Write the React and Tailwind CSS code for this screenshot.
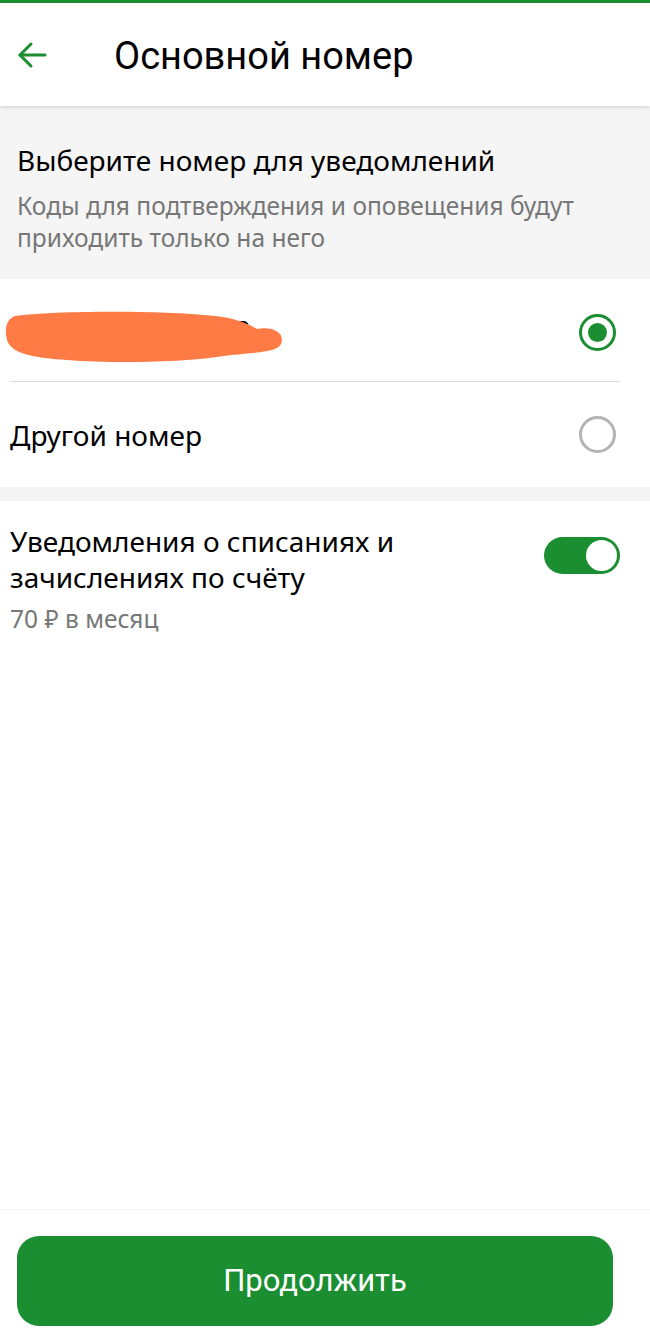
import React from "react";

export default function App() {
  const body = { fontFamily: '"Noto Sans", "Open Sans", sans-serif' };
  return (
    <div className="flex h-[1328px] w-[650px] flex-col bg-white text-black" style={body}>
      <div className="h-[3px] bg-[#1a8e30]" />
      <header className="relative z-10 flex h-[103px] items-center bg-white shadow-[0_2px_4px_rgba(0,0,0,0.12)]">
        <div className="flex w-[114px] items-center pl-[16px]">
          <svg width="32" height="32" viewBox="0 0 32 32" fill="none" stroke="#1a8e30" strokeWidth="3" strokeLinecap="round" strokeLinejoin="round">
            <path d="M29 16H4" />
            <path d="M15 5L4 16l11 11" />
          </svg>
        </div>
        <h1 className="pt-[3px] text-[38px] leading-none text-black" style={{ fontFamily: 'Roboto, "Noto Sans", sans-serif' }}>
          Основной номер
        </h1>
      </header>

      <section className="h-[173px] bg-[#f5f5f5] px-[17px] pt-[36px]">
        <h2 className="text-[28px] leading-[36px] text-black">Выберите номер для уведомлений</h2>
        <p className="mt-[12px] text-[24.5px] leading-[32px] text-[#777]">
          Коды для подтверждения и оповещения будут приходить только на него
        </p>
      </section>

      <div className="pl-[10px] pr-[30px]">
        <div className="relative flex h-[103px] items-center justify-between border-b border-[#dcdcdc] pt-[4px]">
          <span className="pb-[14px] pl-[212px] text-[28px] text-black">та</span>
          <svg className="absolute left-[-5px] top-[31px]" width="280" height="56" viewBox="0 0 280 56">
            <path
              d="M10 6 C50 1 150 0 210 6 C228 8 240 12 252 19 C270 16 280 24 276 34 C272 42 256 42 226 45 C186 52 116 54 62 50 C30 48 6 44 2 30 C-1 18 2 9 10 6 Z"
              fill="#fe7b45"
            />
          </svg>
          <div className="mr-[4px] flex h-[37px] w-[37px] items-center justify-center rounded-full border-[3.5px] border-[#1a8e30]">
            <div className="h-[19px] w-[19px] rounded-full bg-[#1a8e30]" />
          </div>
        </div>
        <div className="flex h-[105px] items-center justify-between">
          <span className="text-[28px] text-black">Другой номер</span>
          <div className="mr-[4px] h-[37px] w-[37px] rounded-full border-[3px] border-[#b4b4b4]" />
        </div>
      </div>

      <div className="h-[14px] bg-[#f5f5f5]" />

      <div className="flex items-start justify-between pl-[10px] pr-[30px] pt-[22px]">
        <div>
          <p className="text-[28px] leading-[36px] text-black">
            Уведомления о списаниях и
            <br />
            зачислениях по счёту
          </p>
          <p className="mt-[8px] text-[24.5px] leading-[32px] text-[#777]">70 ₽ в месяц</p>
        </div>
        <div className="mt-[14px] flex h-[37px] w-[76px] items-center justify-end rounded-full bg-[#1a8e30] pr-[3px]">
          <div className="h-[31px] w-[31px] rounded-full bg-white" />
        </div>
      </div>

      <div className="flex-1" />

      <div className="border-t border-[#f2f2f2] px-[17px] pb-[2px] pt-[26px]">
        <button className="flex h-[90px] w-[596px] items-center justify-center rounded-[22px] bg-[#1a8e30] text-[31px] text-white" style={{ fontFamily: 'Roboto, "Noto Sans", sans-serif' }}>
          Продолжить
        </button>
      </div>
    </div>
  );
}
